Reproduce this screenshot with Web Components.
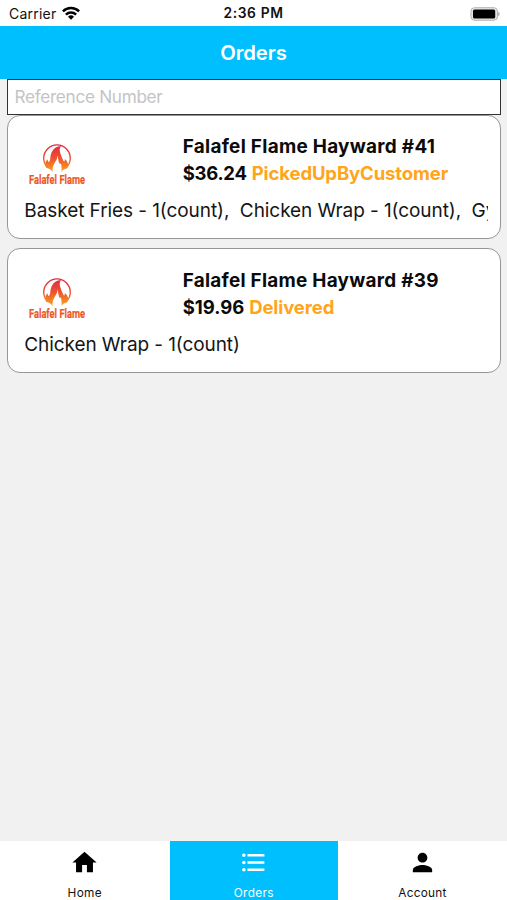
<!DOCTYPE html>
<html lang="en">
<head>
<meta charset="utf-8">
<title>Orders</title>
<style>
html,body{margin:0;height:100%}
body{font-family:Inter,"Liberation Sans",sans-serif;background:#f1f1f1;overflow:hidden}
</style>
</head>
<body>
<orders-app></orders-app>
<script>
const define = (name, html, ready) => {
  const t = document.createElement('template');
  t.innerHTML = html;
  customElements.define(name, class extends HTMLElement {
    connectedCallback() {
      if (this.shadowRoot) return;
      this.attachShadow({mode: 'open'}).append(t.content.cloneNode(true));
      if (ready) ready(this, this.shadowRoot);
    }
  });
};

// A single line of text, tracked so that it occupies the given width.
define('fit-text', `<style>:host{display:inline-block;white-space:pre}</style><span><slot></slot></span>`, (el, root) => {
  const span = root.querySelector('span');
  const natural = span.getBoundingClientRect().width;
  const n = el.textContent.length;
  if (natural) span.style.letterSpacing = ((+el.getAttribute('width') - natural) / n) + 'px';
});

define('status-bar', `<style>
:host{display:grid;grid-template-columns:1fr auto 1fr;align-items:center;height:25.5px;background:#fff;color:#111;font-size:14px;line-height:27px}
.left{display:flex;align-items:center;gap:6px;padding-left:9px}
.left svg{margin-top:-1px;margin-left:-1px}
.time{font-weight:600;font-size:13.8px}
.bat{justify-self:end;margin-right:7px;display:flex}
</style>
<div class="left"><fit-text width="47.5">Carrier</fit-text>
<svg width="18" height="14" viewBox="0 0 18 14"><g fill="none" stroke="#000" stroke-width="2.5"><path d="M.9 5.4a11.5 11.5 0 0 1 16.2 0"/><path d="M3.9 8.7a7.3 7.3 0 0 1 10.2 0"/></g><path d="M9 13.8 6 10.8a4.3 4.3 0 0 1 6 0Z"/></svg></div>
<fit-text class="time" width="60">2:36 PM</fit-text>
<svg class="bat" width="30" height="14" viewBox="0 0 30 14"><rect x=".9" y=".7" width="26.6" height="12.6" rx="3.6" fill="#e4e4e4" stroke="#b4b4b4" stroke-width="1"/><rect x="3" y="2.5" width="22.2" height="9" rx="1.6"/><path d="M28.2 4.6q3 2.4 0 4.8z" fill="#aaa"/></svg>`);

define('nav-header', `<style>
:host{display:flex;justify-content:center;align-items:center;box-sizing:border-box;height:53.5px;padding-top:1px;background:#00bfff;color:#fff;font-weight:600;font-size:20.3px;line-height:24px}
</style><slot></slot>`);

define('search-field', `<style>
:host{display:flex;align-items:center;box-sizing:border-box;height:36px;margin:0 6.5px 0 7px;padding-left:6.5px;background:#fff;border:1.5px solid #333;color:#c4c4c6;font-size:17.2px;line-height:34px}
</style><slot></slot>`);

define('flame-logo', `<style>:host{display:block}svg{display:block}text{font-family:"Roboto","Liberation Sans",sans-serif;font-weight:700}</style>
<svg width="74" height="46" viewBox="0 0 74 46">
<defs><linearGradient id="g" x1="0" y1="0" x2="0" y2="28" gradientUnits="userSpaceOnUse"><stop offset="0" stop-color="#e5243f"/><stop offset=".5" stop-color="#ee5230"/><stop offset="1" stop-color="#fba31c"/></linearGradient></defs>
<path d="M19.200 23.200A13.300 13.300 0 1 1 38.800 23.200" fill="none" stroke="url(#g)" stroke-width="1.400"/>
<path fill="url(#g)" d="M24.500 28C23 25 20 24.500 18.200 23.800C16.500 20.500 17 17.500 19.700 15.200C19.700 18 20.400 18.500 21.500 17.200C22.700 15.500 21.800 12.500 23.500 8.500C25.500 4.500 28.500 2.200 33 2C30.800 5.500 32 8 33 11C33.500 13.500 34.500 14.200 35.500 17C36.300 18 37 17 36.800 15C40.800 18.500 41 22 38.700 24.500C36.500 25 34.800 25.500 33.500 28C33.700 24 33.500 22 33 19.500C32 20.500 31 19.500 30.700 17.500C30 15.500 30.300 13.500 29.600 11.500C29.600 14 28.500 16 27.200 18C25 21.500 24.300 24 24.500 28Z"/>
<text transform="translate(1 40) scale(.82 1)" font-size="12.800" textLength="68.300" lengthAdjust="spacingAndGlyphs" fill="#ed5726" stroke="#ed5726" stroke-width=".2">Falafel Flame</text>
</svg>`);

define('order-card', `<style>
:host{display:block;box-sizing:border-box;height:124.500px;margin:-.5px 6.500px 9.500px 7px;border:1.3px solid #969696;border-radius:13px;background:#fff;color:#0b0b0b;overflow:hidden}
.top{display:grid;grid-template-columns:154.700px 1fr;padding:18px 0 0 20px;height:62px}
flame-logo{margin-top:10.500px}
.info{display:flex;flex-direction:column;margin-top:.5px;font-weight:700;font-size:18.900px;line-height:26px}
.items{margin:.8px 11.500px 0 16.300px;overflow:hidden;white-space:pre;font-size:19px;line-height:30px;color:#151515}
</style>
<div class="top"><flame-logo></flame-logo><div class="info"><slot></slot></div></div>
<div class="items"><slot name="items"></slot></div>`);

define('order-status', `<style>:host{display:flex;gap:5px;font-size:18.500px}.s{color:#ffa51a}</style><slot name="price"></slot><span class="s"><slot></slot></span>`);

define('tab-item', `<style>
:host{display:flex;flex-direction:column;align-items:center;box-sizing:border-box;padding-top:7.500px;background:#fff;color:#111;font-size:11.800px;line-height:16px}
:host([active]){background:#00bfff;color:#fff}
svg{display:block;width:29px;height:29px;margin-bottom:7.500px;fill:currentColor}
:host(:not([active])) svg{fill:#000}
</style><svg viewBox="0 0 24 24"><path/></svg><slot></slot>`, (el, root) => {
  const icons = {
    home: 'M10 20v-6h4v6h5v-8h3L12 3 2 12h3v8z',
    list: 'M4 10.500a1.500 1.500 0 1 0 0 3 1.500 1.500 0 0 0 0-3zm0-6a1.500 1.500 0 1 0 0 3 1.500 1.500 0 0 0 0-3zm0 12a1.500 1.500 0 1 0 0 3 1.500 1.500 0 0 0 0-3zM7 19h14v-2H7v2zm0-6h14v-2H7v2zm0-8v2h14V5H7z',
    person: 'M12 12c2.210 0 4-1.790 4-4s-1.790-4-4-4-4 1.790-4 4 1.790 4 4 4zm0 2c-2.670 0-8 1.340-8 4v2h16v-2c0-2.660-5.330-4-8-4z'
  };
  root.querySelector('path').setAttribute('d', icons[el.getAttribute('icon')]);
});

define('tab-bar', `<style>:host{display:grid;grid-template-columns:169.500px 168.500px 1fr;height:59.500px}</style><slot></slot>`);

define('orders-app', `<style>
:host{display:flex;flex-direction:column;height:100vh;background:#f1f1f1}
main{flex:1;min-height:0}
</style>
<status-bar></status-bar>
<nav-header><fit-text width="66.500">Orders</fit-text></nav-header>
<main>
<search-field><fit-text width="148">Reference Number</fit-text></search-field>
<order-card>
<fit-text width="252.500">Falafel Flame Hayward #41</fit-text>
<order-status><fit-text slot="price" width="64">$36.24</fit-text><fit-text width="196.500">PickedUpByCustomer</fit-text></order-status>
<fit-text slot="items" width="472">Basket Fries - 1(count),  Chicken Wrap - 1(count),  Gy</fit-text>
</order-card>
<order-card>
<fit-text width="256">Falafel Flame Hayward #39</fit-text>
<order-status><fit-text slot="price" width="61.500">$19.96</fit-text><fit-text width="85">Delivered</fit-text></order-status>
<fit-text slot="items" width="215.500">Chicken Wrap - 1(count)</fit-text>
</order-card>
</main>
<tab-bar>
<tab-item icon="home"><fit-text width="34.500">Home</fit-text></tab-item>
<tab-item icon="list" active><fit-text width="40">Orders</fit-text></tab-item>
<tab-item icon="person"><fit-text width="48.500">Account</fit-text></tab-item>
</tab-bar>`);
</script>
</body>
</html>
